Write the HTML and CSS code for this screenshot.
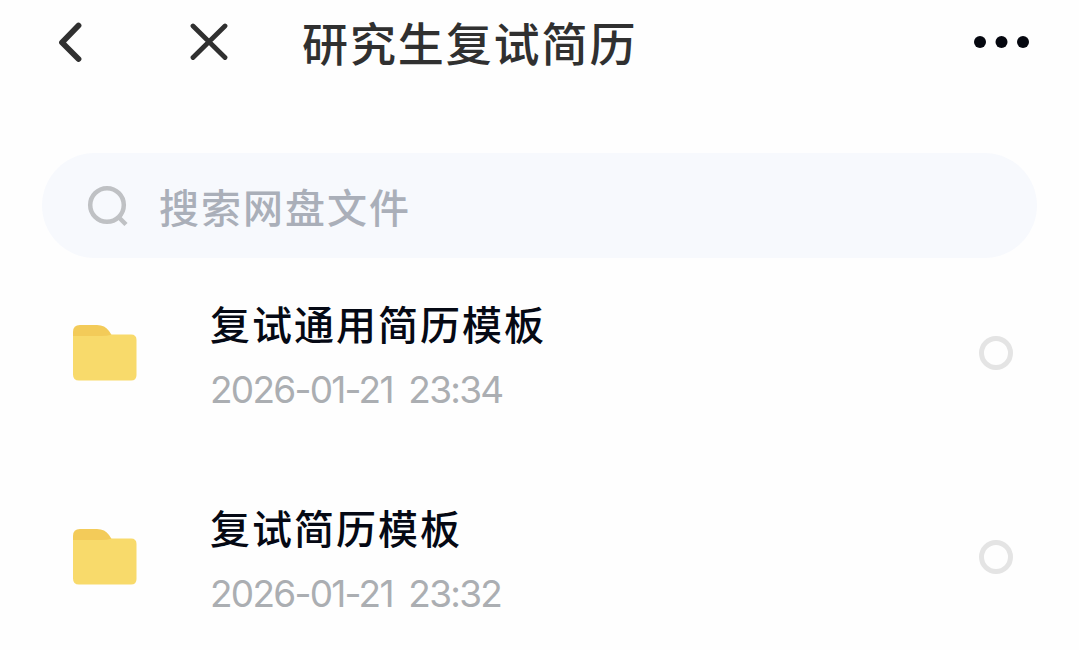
FILE: index.html
```html
<!DOCTYPE html>
<html lang="zh-CN">
<head>
    <meta charset="UTF-8">
    <meta name="viewport" content="width=device-width, initial-scale=1.0">
    <title>研究生复试简历</title>
    <link rel="stylesheet" href="styles.css">
</head>
<body>
    <header class="header">
        <svg class="icon-back" viewBox="0 0 26 40" width="26" height="40">
            <path d="M21.500 3.500L5 20.500L21.500 37"/>
        </svg>
        <svg class="icon-close" viewBox="0 0 38 38" width="38" height="38">
            <path d="M3 3L35 34.500M35 3L3 34.500"/>
        </svg>
        <h1 class="title">研究生复试简历</h1>
        <svg class="icon-more" viewBox="0 0 56 14" width="56" height="14">
            <circle cx="6" cy="7" r="6"/>
            <circle cx="27.500" cy="7" r="6"/>
            <circle cx="49" cy="7" r="6"/>
        </svg>
    </header>
    <div class="search">
        <svg class="icon-search" viewBox="0 0 42 42" width="42" height="42">
            <circle cx="20" cy="20" r="16.800"/>
            <path d="M31.500 32L39 39.500"/>
        </svg>
        <span class="placeholder">搜索网盘文件</span>
    </div>
    <ul class="file-list">
        <li class="file">
            <svg class="folder" viewBox="0 0 64 56" width="64" height="56">
                <path class="folder-tab" d="M0 16V7Q0 0 7 0H24Q32 0 36 6L40 12V22H0Z"/>
                <path class="folder-body" d="M0 11H28Q34 11 39 9.500H58Q63.500 9.500 63.500 15V50Q63.500 55.500 58 55.500H6Q0 55.500 0 49.500Z"/>
            </svg>
            <div class="info">
                <div class="name">复试通用简历模板</div>
                <div class="date">2026-01-21 23:34</div>
            </div>
            <span class="check"></span>
        </li>
        <li class="file">
            <svg class="folder" viewBox="0 0 64 56" width="64" height="56">
                <path class="folder-tab" d="M0 16V7Q0 0 7 0H24Q32 0 36 6L40 12V22H0Z"/>
                <path class="folder-body" d="M0 11H28Q34 11 39 9.500H58Q63.500 9.500 63.500 15V50Q63.500 55.500 58 55.500H6Q0 55.500 0 49.500Z"/>
            </svg>
            <div class="info">
                <div class="name">复试简历模板</div>
                <div class="date">2026-01-21 23:32</div>
            </div>
            <span class="check"></span>
        </li>
    </ul>
</body>
</html>
```
FILE: styles.css
```css
* {
    box-sizing: border-box;
}
body {
    margin: 0;
    background: #fefefe;
    font-family: "Noto Sans CJK SC", sans-serif;
    overflow: hidden;
}
svg {
    flex: none;
    fill: none;
}
.header {
    display: flex;
    align-items: center;
    height: 84px;
    padding: 0 49px 0 57px;
}
.icon-back,
.icon-close {
    stroke: #303030;
    stroke-width: 5.8;
    stroke-linecap: round;
    stroke-linejoin: round;
}
.icon-close {
    margin-left: 107px;
    stroke-width: 4.8;
}
.title {
    flex: 1;
    margin: 0 0 2px 74px;
    color: #303030;
    font-size: 46px;
    font-weight: 500;
    line-height: 60px;
    letter-spacing: 1.9px;
    white-space: nowrap;
}
.icon-more {
    fill: #05070f;
}
.search {
    display: flex;
    align-items: center;
    height: 105px;
    margin: 69px 42px 0;
    padding-left: 45px;
    border-radius: 53px;
    background: #f7f9fd;
}
.icon-search {
    stroke: #bfc1c4;
    stroke-width: 4.5;
}
.placeholder {
    margin: 0 0 0 30px;
    color: #aaafb9;
    font-size: 40px;
    font-weight: 500;
    line-height: 56px;
    letter-spacing: 2px;
}
.file-list {
    margin: 0;
    padding: 0;
    list-style: none;
}
.file {
    display: flex;
    align-items: center;
    height: 204px;
    padding: 0 66px 14px 73px;
}
.folder-tab {
    fill: #f3cb59;
}
.folder-body {
    fill: #f8da6b;
}
.info {
    flex: 1;
    margin: 2px 0 0 73px;
}
.name {
    color: #050914;
    font-size: 40px;
    font-weight: 500;
    line-height: 56px;
    letter-spacing: 2px;
}
.date {
    margin-top: 15px;
    color: #abaeb2;
    font-family: Inter, "Noto Sans CJK SC", sans-serif;
    font-size: 37px;
    font-weight: 400;
    line-height: 48px;
    letter-spacing: -1.75px;
    word-spacing: 7px;
}
.check {
    width: 34px;
    height: 34px;
    border: 5px solid #e4e4e4;
    border-radius: 50%;
}
```
